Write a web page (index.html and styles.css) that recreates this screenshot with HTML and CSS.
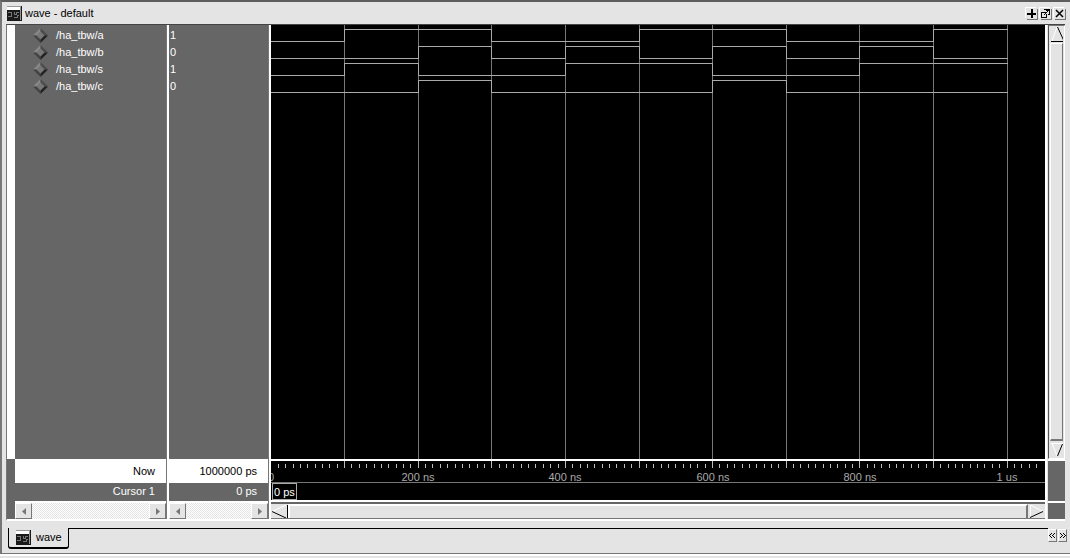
FILE: index.html
```html
<!DOCTYPE html>
<html lang="en">
<head>
<meta charset="utf-8">
<title>wave - default</title>
<link rel="stylesheet" href="styles.css">
</head>
<body>
<svg class="defs" width="0" height="0" aria-hidden="true">
  <defs>
    <symbol id="wave-icon" viewBox="0 0 15 15">
      <path fill="#999" d="M0 0h15v15H0z"/><path fill="#fff" d="M0 1h13v3H0z"/><path fill="#1a1a1a" d="M0 4h13v10H0zM14 0h1v15H0v-1h14z"/>
      <path fill="none" stroke="#777" d="M1 6.500h4M4.500 6v4M1 10.500h4M7.500 6v3M7 8.500h2M9.500 6v3M9 6.500h3M7 11.500h3M10.500 9v3M10 9.500h2"/>
    </symbol>
    <symbol id="diamond" viewBox="0 0 15 15">
      <path fill="#888" d="M7.500 0L0 7.500l4 0 3.500-4z"/><path fill="#4c4c4c" d="M7.500 0L15 7.500h-4l-3.500-4z"/><path fill="#444" d="M0 7.500L7.500 15v-4L4 7.500z"/><path fill="#222" d="M15 7.500L7.500 15v-4L11 7.500z"/><path fill="#777" d="M7.500 3.500l4 4-4 4-4-4z"/>
    </symbol>
  </defs>
</svg>
<div class="window">
  <header class="titlebar">
    <svg class="app-icon"><use href="#wave-icon"/></svg>
    <h1 class="title">wave - default</h1>
    <button class="win-btn" aria-label="Zoom"><svg width="9" height="9" shape-rendering="crispEdges"><path d="M4 0h2v9H4zM0 4h9v2H0z"/></svg></button>
    <button class="win-btn" aria-label="Undock"><svg width="9" height="9" shape-rendering="crispEdges"><path d="M3 0h6v6H8V2H7v1H6v1H5V3h1V2H5V1H3zM0 3h5v1H1v4h4V5h1v4H0zM3 5h1v1H3zM4 4h1v1H4zM7 5h1v1H7z"/></svg></button>
    <button class="win-btn" aria-label="Close"><svg width="9" height="9"><path d="M1 1l7 7M8 1L1 8" stroke="#000" stroke-width="1.500"/></svg></button>
  </header>

  <main class="workspace">
    <div class="gutter"><div class="gutter-top"></div></div>
    <section class="pane names">
      <ul class="pane-body signals">
        <li><svg class="sig"><use href="#diamond"/></svg>/ha_tbw/a</li>
        <li><svg class="sig"><use href="#diamond"/></svg>/ha_tbw/b</li>
        <li><svg class="sig"><use href="#diamond"/></svg>/ha_tbw/s</li>
        <li><svg class="sig"><use href="#diamond"/></svg>/ha_tbw/c</li>
      </ul>
      <div class="now">Now</div>
      <div class="cursor">Cursor 1</div>
      <div class="hscroll"><button class="arrow" aria-label="Scroll names left"><svg width="4" height="7"><path fill="#777" d="M4 0v7L0 3.500z"/></svg></button><button class="arrow" aria-label="Scroll names right"><svg width="4" height="7"><path fill="#777" d="M0 0v7l4-3.500z"/></svg></button></div>
    </section>
    <div class="sash"></div>
    <section class="pane values">
      <ul class="pane-body signals">
        <li>1</li><li>0</li><li>1</li><li>0</li>
      </ul>
      <div class="now">1000000 ps</div>
      <div class="cursor">0 ps</div>
      <div class="hscroll"><button class="arrow" aria-label="Scroll values left"><svg width="4" height="7"><path fill="#777" d="M4 0v7L0 3.500z"/></svg></button><button class="arrow" aria-label="Scroll values right"><svg width="4" height="7"><path fill="#777" d="M0 0v7l4-3.500z"/></svg></button></div>
    </section>
    <div class="sash"></div>
    <section class="pane waves">
      <div class="pane-body plot">
        <svg class="fill" shape-rendering="crispEdges">
          <g id="grid" class="grid"></g>
          <g id="traces" class="trace"></g>
        </svg>
      </div>
      <div class="ruler"><svg class="fill" shape-rendering="crispEdges"><g id="ticks" class="ticks"></g><g id="labels" class="labels"></g></svg></div>
      <div class="cursor-track"><span class="cursor-time">0 ps</span></div>
      <div class="wave-scroll">
        <button class="wave-arrow" aria-label="Scroll waves left"><svg width="16" height="13"><path d="M0 6.500L14 0" stroke="#fff"/><path d="M0 6.500L14 13M15.500 0v13" stroke="#000"/></svg></button>
        <div class="hthumb"></div>
        <button class="wave-arrow" aria-label="Scroll waves right"><svg width="16" height="13"><path d="M2.500 13V0L15 6.500" fill="none" stroke="#fff"/><path d="M2 12.500L15 6.500" stroke="#000"/></svg></button>
      </div>
    </section>
    <aside class="side">
      <div class="vscroll">
        <button class="varrow" aria-label="Scroll up"><svg width="12" height="15"><path d="M1 14L6 0" stroke="#fff"/><path d="M6.500 0l6 13M0 14.500h12" stroke="#000"/></svg></button>
        <div class="vthumb"></div>
        <button class="varrow" aria-label="Scroll down"><svg width="12" height="15"><path d="M0 1.500h12M1 1l5 13" stroke="#fff" fill="none"/><path d="M6.500 14l5-12" stroke="#000"/></svg></button>
      </div>
      <div class="block-tall"></div>
      <div class="block-short"></div>
    </aside>
  </main>

  <nav class="tabs">
    <a class="tab" href="#wave"><svg class="app-icon"><use href="#wave-icon"/></svg>wave</a>
    <div class="tab-line"></div>
    <div class="tab-scroll">
      <button class="tab-btn" aria-label="Previous tab"><svg width="7" height="7" shape-rendering="crispEdges"><path d="M2 1h1v1H2zM1 2h1v1H1zM0 3h1v1H0zM1 4h1v1H1zM2 5h1v1H2zM5 1h1v1H5zM4 2h1v1H4zM3 3h1v1H3zM4 4h1v1H4zM5 5h1v1H5z"/></svg></button>
      <button class="tab-btn" aria-label="Next tab"><svg width="7" height="7" shape-rendering="crispEdges"><path d="M1 1h1v1H1zM2 2h1v1H2zM3 3h1v1H3zM2 4h1v1H2zM1 5h1v1H1zM4 1h1v1H4zM5 2h1v1H5zM6 3h1v1H6zM5 4h1v1H5zM4 5h1v1H4z"/></svg></button>
    </div>
  </nav>
</div>
<div class="desk"></div>
<script src="wave.js"></script>
</body>
</html>
```
FILE: styles.css
```css
* { box-sizing: border-box; }
body {
  margin: 0;
  height: 100vh;
  display: flex;
  flex-direction: column;
  background: #e4e4e4;
  color: #000;
  font: 11px/17px "Liberation Sans", Arial, sans-serif;
}
.defs { position: absolute; }
button { padding: 0; margin: 0; border: 0; background: #e4e4e4; color: #000; font: inherit; display: flex; align-items: center; justify-content: center; }
.window {
  flex: 1;
  min-height: 0;
  display: flex;
  flex-direction: column;
  border-top: 2px solid #5c5c5c;
  border-left: 2px solid #777;
  border-bottom: 1px solid #777;
}
.desk { height: 4px; border-top: 2px solid #fff; }
.titlebar { height: 22px; display: flex; align-items: center; padding: 0 5px; gap: 3px; }
.app-icon { width: 15px; height: 15px; flex: none; }
.title { margin: 0; flex: 1; font-size: 11px; font-weight: normal; }
.win-btn { width: 11px; height: 11px; box-shadow: 1px 1px 0 #777, -1px -1px 0 #fff; }

.workspace { flex: 1; min-height: 0; display: flex; margin: 0 5px 0 4px; border-top: 1px solid #444; border-left: 1px solid #777; border-bottom: 2px solid #fff; }
.gutter { width: 8px; background: #666; padding-bottom: 60px; }
.gutter-top { height: 100%; background: #fff; }
.pane { display: flex; flex-direction: column; min-width: 0; background: #666; }
.pane-body { flex: 1; min-height: 0; }
.names { width: 151px; }
.values { width: 99px; }
.waves { flex: 1; background: #000; }
.sash { width: 3px; background: #fff; border-left: 1px solid #777; }
.signals { list-style: none; margin: 0; padding: 2px 0 0 1px; color: #fff; }
.names .signals { padding-left: 18px; }
.signals li { display: flex; align-items: center; gap: 8px; height: 17px; }
.sig { width: 15px; height: 15px; flex: none; }
.now { height: 24px; line-height: 20px; border-top: 2px solid #fff; background: #fff; text-align: right; padding-right: 11px; }
.cursor { height: 18px; color: #fff; text-align: right; padding-right: 11px; }
.hscroll {
  height: 18px;
  display: flex;
  justify-content: space-between;
  border-top: 2px solid #fff;
  background: repeating-conic-gradient(#fff 0 25%, #e4e4e4 0 50%) 0 0 / 2px 2px;
}
.arrow { width: 17px; height: 16px; border: 1px solid; border-color: #fff #777 #777 #fff; }

.fill { display: block; width: 100%; height: 100%; }
.plot { overflow: hidden; }
.grid { stroke: #777; }
.trace { stroke: #aaa; fill: none; }
.ruler { height: 24px; border-top: 2px solid #fff; border-bottom: 1px solid #777; overflow: hidden; }
.ticks { stroke: #bbb; }
.labels { fill: #aaa; text-anchor: middle; }
.cursor-track { height: 17px; color: #fff; display: flex; padding-left: 1px; }
.cursor-time { border: 1px solid #aaa; line-height: 16px; padding: 0 1px; }
.wave-scroll { height: 19px; display: flex; background: #e4e4e4; border-top: 2px solid #fff; box-shadow: inset 0 2px 0 #666, inset 0 -1px 0 #777; padding: 2px 1px 1px; }
.wave-arrow { width: 16px; }
.hthumb { flex: 1; border-top: 2px solid #fff; border-left: 2px solid #fff; border-right: 2px solid #777; }

.side { width: 20px; display: flex; flex-direction: column; background: #e4e4e4; border-left: 2px solid #fff; padding-left: 1px; }
.vscroll { flex: 1; min-height: 0; display: flex; flex-direction: column; border: 1px solid #fff; border-top-color: #777; border-left-color: #555; padding: 1px; gap: 1px; }
.varrow { height: 15px; }
.vthumb { flex: 1; border: 1px solid; border-color: #fff #777 #777 #fff; border-bottom-width: 2px; }
.block-tall { height: 42px; background: #666; border-top: 2px solid #fff; }
.block-short { height: 18px; background: #666; border-top: 2px solid #fff; }

.tabs { height: 32px; display: flex; align-items: flex-start; padding: 7px 3px 0 6px; }
.tab { height: 21px; display: flex; align-items: center; gap: 5px; padding: 0 6px 0 7px; border: 1px solid #000; border-top: 0; border-bottom-width: 2px; border-radius: 0 0 3px 3px; color: #000; text-decoration: none; }
.tab-line { flex: 1; border-top: 1px solid #000; }
.tab-scroll { display: flex; gap: 1px; padding-top: 1px; }
.tab-btn { width: 9px; height: 13px; border: 1px solid; border-color: #fff #777 #777 #fff; }
```
FILE: wave.js
```js
const NS = "http://www.w3.org/2000/svg";
const STEP = 73.6;
const edge = i => Math.floor(i * STEP) + 0.5;

function add(parent, name, attrs, text) {
  const el = document.createElementNS(NS, name);
  for (const key in attrs) el.setAttribute(key, attrs[key]);
  if (text) el.textContent = text;
  document.getElementById(parent).appendChild(el);
}

for (let i = 1; i <= 10; i++) {
  add("grid", "line", { x1: edge(i), x2: edge(i), y1: 0, y2: "100%" });
}

// One level per 100 ns interval.
["0110011001", "0010101010", "0100110011", "0010001000"].forEach((bits, row) => {
  const level = b => 4.5 + row * 17 + (b === "1" ? 0 : 12);
  let d = "M0 " + level(bits[0]);
  [...bits].forEach((b, i) => {
    d += "V" + level(b) + "H" + edge(i + 1);
  });
  add("traces", "path", { d });
});

for (let i = 1; i <= 104; i++) {
  const x = edge(i / 10);
  add("ticks", "line", { x1: x, x2: x, y1: i % 10 ? 3 : 0, y2: 7 });
}
["0", "200 ns", "400 ns", "600 ns", "800 ns", "1 us"].forEach((label, i) => {
  add("labels", "text", { x: Math.round(i * 2 * STEP), y: 20 }, label);
});
```
